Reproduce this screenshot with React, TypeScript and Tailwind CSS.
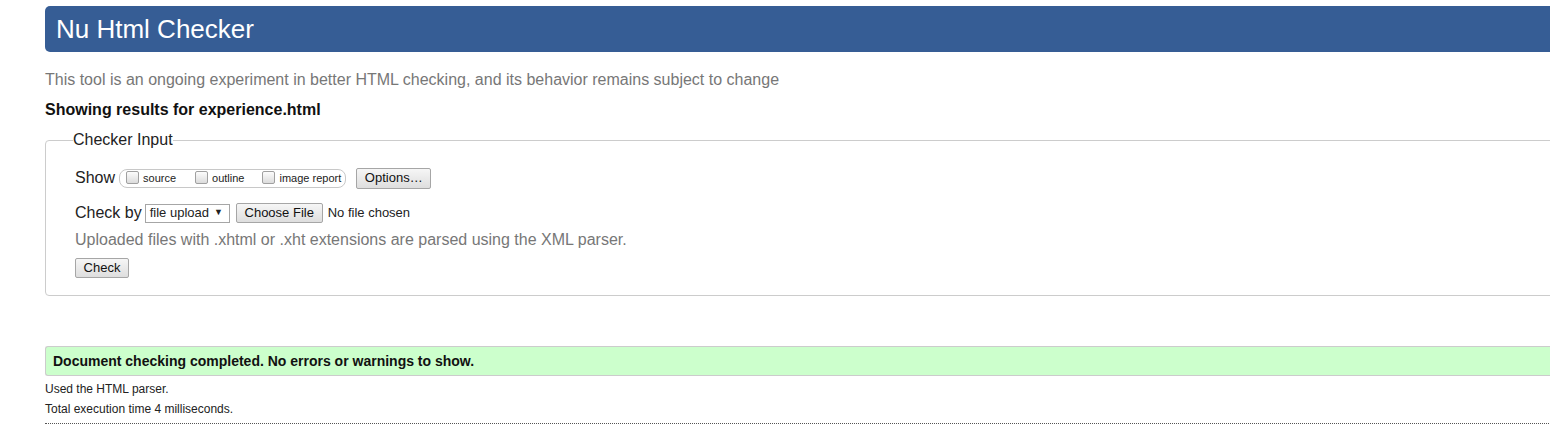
const font = { fontFamily: '"Liberation Sans", Arial, sans-serif' }

function Box() {
  return (
    <span className="inline-block w-[13px] h-[13px] rounded-[2px] border border-[#a0a0a0] bg-gradient-to-b from-[#fcfcfc] to-[#dcdcdc] align-[-2px] mr-[4px]" />
  )
}

function Btn({ children, className = '' }: { children: React.ReactNode; className?: string }) {
  return (
    <span
      className={`inline-flex items-center justify-center border border-[#a6a6a6] rounded-[2px] bg-gradient-to-b from-[#f6f6f6] to-[#dedede] text-[#111] ${className}`}
    >
      {children}
    </span>
  )
}

export default function App() {
  return (
    <div className="w-[1550px] h-[439px] overflow-hidden bg-white text-[#222]" style={font}>
      <div className="ml-[45px] w-[1530px]">
        <div className="mt-[6px] h-[46px] rounded-l-[5px] bg-[#365d95] flex items-center pl-[11px]">
          <h1 className="text-[26px] text-white leading-none">Nu Html Checker</h1>
        </div>

        <p className="mt-[18px] text-[16px] leading-[20px] text-[#777]">
          This tool is an ongoing experiment in better HTML checking, and its behavior remains subject to change
        </p>
        <p className="mt-[10px] text-[16px] leading-[20px] font-bold text-[#111]">
          Showing results for experience.html
        </p>

        <fieldset className="mt-[10px] h-[166px] border border-[#cccccc] rounded-[4px] pl-[29px] pt-[17px]">
          <legend className="ml-[-2px] text-[16px] leading-[20px] text-[#222]">Checker Input</legend>

          <div className="flex items-center h-[22px]">
            <span className="text-[16px] mr-[4px]">Show</span>
            <span className="inline-flex items-center h-[19px] border border-[#c8c8c8] rounded-[8px] pl-[6px] pr-[4px] text-[11px]">
              <span className="mr-[19px]"><Box />source</span>
              <span className="mr-[18px]"><Box />outline</span>
              <span><Box />image report</span>
            </span>
            <Btn className="ml-[10px] h-[21px] w-[75px] text-[13px]">Options…</Btn>
          </div>

          <div className="flex items-center h-[20px] mt-[14px]">
            <span className="text-[16px] mr-[3px]">Check by</span>
            <span className="inline-flex items-center h-[19px] w-[85px] border border-[#a6a6a6] bg-white pl-[4px] text-[13px]">
              file upload
              <span className="ml-[5px] text-[9px]">▼</span>
            </span>
            <Btn className="ml-[6px] h-[20px] w-[87px] text-[13px]">Choose File</Btn>
            <span className="ml-[5px] text-[13px]">No file chosen</span>
          </div>

          <p className="mt-[7px] text-[16px] leading-[20px] text-[#777]">
            Uploaded files with .xhtml or .xht extensions are parsed using the XML parser.
          </p>

          <Btn className="mt-[8px] h-[20px] w-[54px] text-[13px]">Check</Btn>
        </fieldset>

        <div className="mt-[50px] h-[30px] rounded-l-[3px] border-y border-l border-[#cccccc] bg-[#ccffcc] flex items-center pl-[7px]">
          <span className="text-[14px] font-bold text-[#111]">Document checking completed. No errors or warnings to show.</span>
        </div>

        <p className="mt-[5px] text-[12px] leading-[16px] text-[#222]">Used the HTML parser.</p>
        <p className="mt-[4px] text-[12px] leading-[16px] text-[#222]">Total execution time 4 milliseconds.</p>
        <div className="mt-[6px] border-t border-dotted border-[#555]" />
      </div>
    </div>
  )
}
